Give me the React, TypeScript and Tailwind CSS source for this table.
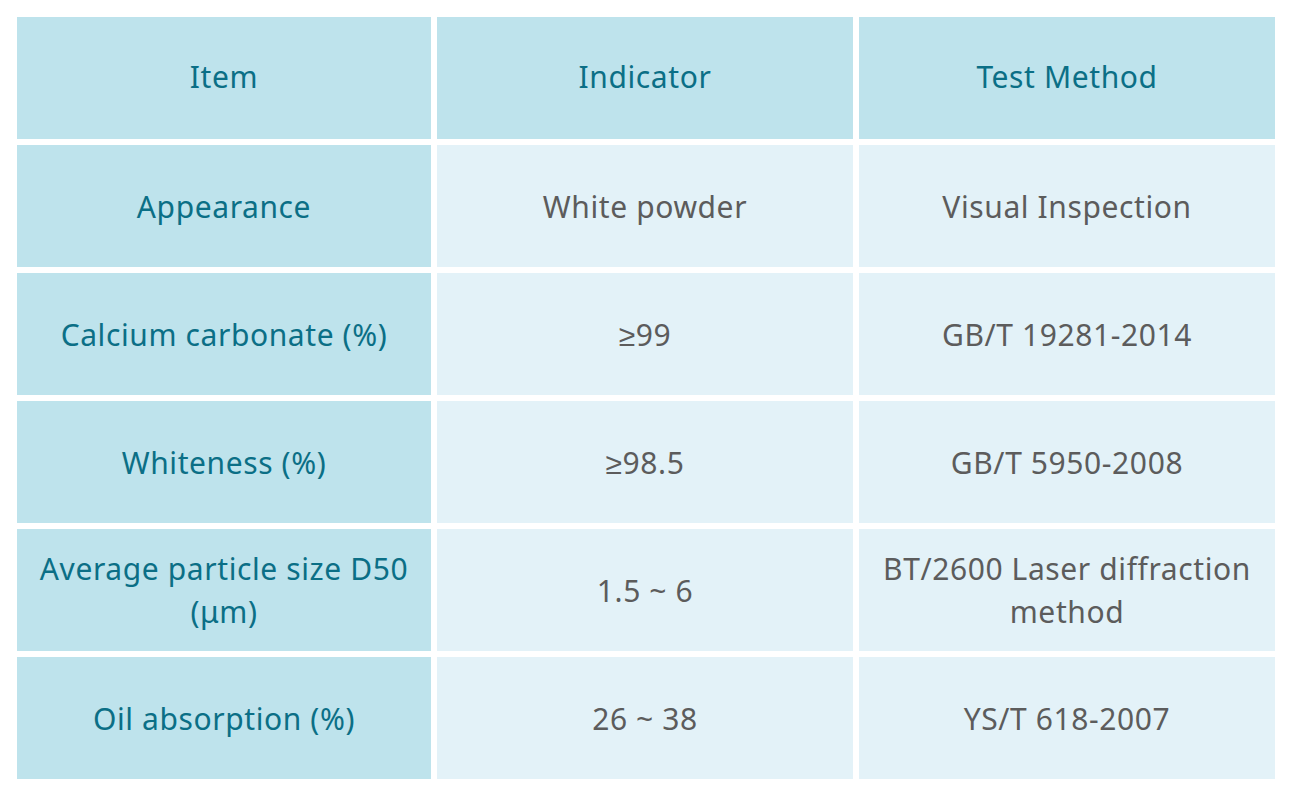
const rows: [string, string, string][] = [
  ["Appearance", "White powder", "Visual Inspection"],
  ["Calcium carbonate (%)", "≥99", "GB/T 19281-2014"],
  ["Whiteness (%)", "≥98.5", "GB/T 5950-2008"],
  ["Average particle size D50 (μm)", "1.5 ~ 6", "BT/2600 Laser diffraction method"],
  ["Oil absorption (%)", "26 ~ 38", "YS/T 618-2007"],
];

export default function App() {
  return (
    <div className="bg-white w-[1290px] h-[794px] p-[17px] font-['Noto_Sans',sans-serif] text-[30px] leading-[43px] tracking-[0.6px]">
      <div className="grid grid-cols-[414px_416px_416px] auto-rows-[122px] gap-[6px]">
        {["Item", "Indicator", "Test Method"].map((h) => (
          <div key={h} className="bg-[#bee3ec] text-[#0b6f86] flex items-center justify-center text-center pb-1">
            {h}
          </div>
        ))}
        {rows.map(([a, b, c]) => (
          <div key={a} className="contents">
            <div className="bg-[#bee3ec] text-[#0b6f86] flex items-center justify-center text-center px-4">
              {a}
            </div>
            <div className="bg-[#e3f2f8] text-[#5c5c5c] flex items-center justify-center text-center px-4">
              {b}
            </div>
            <div className="bg-[#e3f2f8] text-[#5c5c5c] flex items-center justify-center text-center px-4">
              {c}
            </div>
          </div>
        ))}
      </div>
    </div>
  );
}
